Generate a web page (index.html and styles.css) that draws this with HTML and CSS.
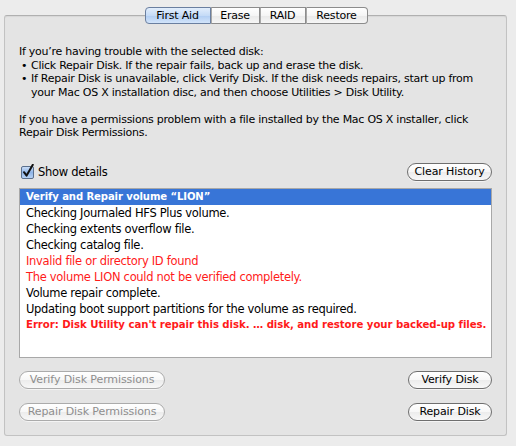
FILE: index.html
```html
<!DOCTYPE html>
<html>
<head>
<meta charset="utf-8">
<link rel="stylesheet" href="styles.css">
</head>
<body>
<div class="window">
  <div class="tabs">
    <div class="tab tab-first tab-selected">First Aid</div>
    <div class="tab tab-erase">Erase</div>
    <div class="tab tab-raid">RAID</div>
    <div class="tab tab-last">Restore</div>
  </div>
  <div class="panel">
    <div class="intro">
      <p class="line">If you’re having trouble with the selected disk:</p>
      <ul class="bullets">
        <li>Click Repair Disk. If the repair fails, back up and erase the disk.</li>
        <li>If Repair Disk is unavailable, click Verify Disk. If the disk needs repairs, start up from your Mac OS X installation disc, and then choose Utilities &gt; Disk Utility.</li>
      </ul>
      <p class="line para2">If you have a permissions problem with a file installed by the Mac OS X installer, click Repair Disk Permissions.</p>
    </div>
    <div class="details-row">
      <label class="check">
        <svg class="checkbox" width="14" height="15" viewBox="0 0 14 15">
          <defs>
            <linearGradient id="cb" x1="0" y1="0" x2="0" y2="1">
              <stop offset="0" stop-color="#cfe0f7"/>
              <stop offset="0.5" stop-color="#8fb5e8"/>
              <stop offset="1" stop-color="#b9d4f5"/>
            </linearGradient>
          </defs>
          <rect x="0.5" y="2.5" width="12" height="12" rx="1.5" fill="url(#cb)" stroke="#5a6f8c"/>
          <path d="M3 8.2 L5.6 11.6 L11.8 0.8" fill="none" stroke="#111" stroke-width="2" stroke-linecap="round" stroke-linejoin="round"/>
        </svg>
        <span>Show details</span>
      </label>
      <div class="btn btn-clear">Clear History</div>
    </div>
    <div class="log">
      <div class="row row-selected">Verify and Repair volume “LION”</div>
      <div class="row">Checking Journaled HFS Plus volume.</div>
      <div class="row">Checking extents overflow file.</div>
      <div class="row">Checking catalog file.</div>
      <div class="row row-red">Invalid file or directory ID found</div>
      <div class="row row-red">The volume LION could not be verified completely.</div>
      <div class="row">Volume repair complete.</div>
      <div class="row">Updating boot support partitions for the volume as required.</div>
      <div class="row row-error">Error: Disk Utility can't repair this disk. … disk, and restore your backed-up files.</div>
    </div>
    <div class="btn-row">
      <div class="btn btn-disabled btn-perm">Verify Disk Permissions</div>
      <div class="btn btn-disk">Verify Disk</div>
    </div>
    <div class="btn-row btn-row2">
      <div class="btn btn-disabled btn-perm">Repair Disk Permissions</div>
      <div class="btn btn-disk">Repair Disk</div>
    </div>
  </div>
</div>
</body>
</html>
```

FILE: styles.css
```css
html, body {
  margin: 0;
  padding: 0;
}
body {
  background: #ececec;
  font-family: "Lucida Grande", "DejaVu Sans", sans-serif;
  font-size: 11px;
  color: #000;
  width: 516px;
  height: 446px;
  overflow: hidden;
}
.window {
  padding: 7px 9px 0 4px;
}
.tabs {
  display: flex;
  justify-content: center;
  position: relative;
  z-index: 1;
  margin-bottom: -9px;
  padding-left: 1px;
}
.tab {
  box-sizing: border-box;
  height: 17px;
  line-height: 15px;
  border: 1px solid #8c8c8c;
  border-left: 1px solid #a8a8a8;
  background: linear-gradient(#ffffff, #f5f5f5 50%, #e9e9e9 51%, #f6f6f6);
  font-size: 11px;
  letter-spacing: -0.2px;
  text-align: center;
  white-space: nowrap;
}
.tab-first {
  width: 66px;
  border-left: 1px solid #6a7fa0;
  border-radius: 4px 0 0 4px;
}
.tab-erase {
  width: 49px;
}
.tab-raid {
  width: 46px;
}
.tab-last {
  width: 62px;
  border-radius: 0 4px 4px 0;
}
.tab-selected {
  background: linear-gradient(#e2eefc, #c5dbf7 50%, #b0cdf3 51%, #d2e4fa);
  border-color: #6a7fa0;
}
.panel {
  height: 390px;
  border: 1px solid #c2c2c2;
  border-top-color: #b0b0b0;
  border-radius: 3px;
  background: #e4e4e4;
  box-shadow: inset 0 1px 1px rgba(0,0,0,0.06);
  padding: 29px 14px 0 14px;
}
.intro {
  line-height: 13.5px;
  letter-spacing: -0.25px;
}
.line {
  margin: 0;
}
.bullets {
  list-style: none;
  margin: 0;
  padding: 0;
}
.bullets li {
  position: relative;
  padding-left: 12px;
}
.bullets li::before {
  content: "•";
  position: absolute;
  left: 2px;
}
.para2 {
  margin-top: 13.5px;
}
.details-row {
  display: flex;
  justify-content: space-between;
  align-items: center;
  margin-top: 23px;
  height: 18px;
}
.check {
  display: flex;
  align-items: center;
  gap: 3px;
  padding-left: 2px;
  font-size: 11.5px;
  letter-spacing: -0.3px;
}
.checkbox {
  display: block;
  margin-top: -1px;
}
.btn {
  box-sizing: border-box;
  height: 18px;
  line-height: 16px;
  border: 1px solid #6e6e6e;
  border-radius: 9px;
  background: linear-gradient(#ffffff, #f7f7f7 50%, #ececec 51%, #f8f8f8);
  box-shadow: 0 1px 0 rgba(255,255,255,0.6);
  font-size: 11px;
  letter-spacing: -0.1px;
  text-align: center;
  white-space: nowrap;
}
.btn-clear {
  width: 85px;
}
.log {
  margin-top: 7px;
  height: 168px;
  border: 1px solid #a8a8a8;
  background: #fff;
  font-size: 11.5px;
  letter-spacing: -0.3px;
}
.row {
  height: 16px;
  line-height: 16px;
  padding-left: 6px;
  white-space: nowrap;
}
.row-selected {
  background: #3875d7;
  color: #fff;
  font-family: "DejaVu Sans Condensed", "DejaVu Sans", sans-serif;
  font-weight: bold;
  font-size: 11.2px;
  letter-spacing: -0.1px;
}
.row-red {
  color: #ff1a1a;
}
.row-error {
  color: #ff1a1a;
  font-family: "DejaVu Sans Condensed", "DejaVu Sans", sans-serif;
  font-weight: bold;
  font-size: 11.3px;
  letter-spacing: -0.05px;
}
.btn-row {
  display: flex;
  justify-content: space-between;
  margin-top: 13px;
}
.btn-row2 {
  margin-top: 14px;
}
.btn-disabled {
  color: #8e8e8e;
  border-color: #ababab;
}
.btn-perm {
  width: 146px;
}
.btn-disk {
  width: 84px;
}
```
